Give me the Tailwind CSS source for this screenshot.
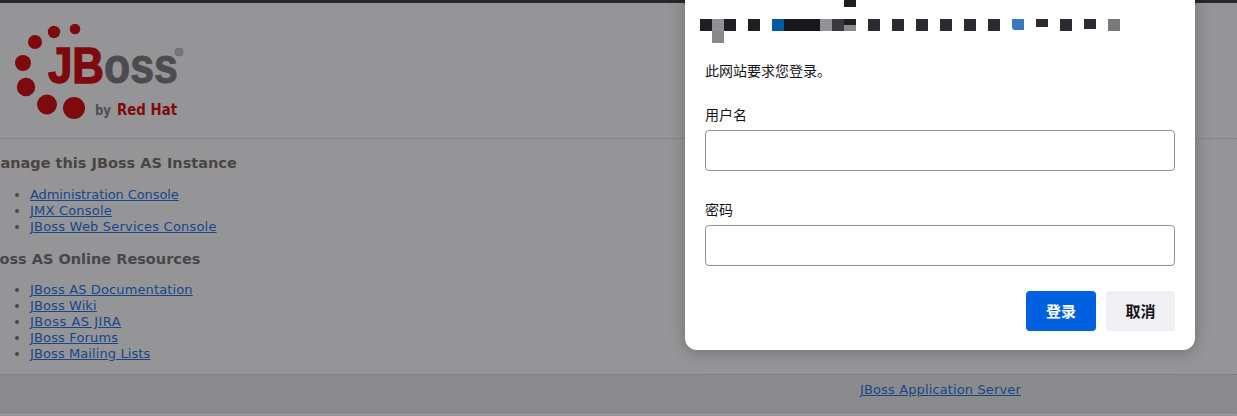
<!DOCTYPE html>
<html lang="en">
<head>
    <meta charset="UTF-8">
    <title>Welcome to JBoss AS</title>
    <script src="https://cdn.jsdelivr.net/npm/@tailwindcss/browser@4"></script>
</head>
<body class="relative h-[416px] w-[1237px] overflow-hidden bg-[#959597] font-['DejaVu_Sans','Noto_Sans_CJK_SC',sans-serif] text-[13px] leading-[16px] text-[#4a4a4c]">
    <!-- Browser edge -->
    <div class="h-[3px] bg-[#26262c]"></div>

    <!-- Header -->
    <div class="h-[136px] border-b border-dotted border-[#77777a]">
        <svg width="240" height="135" viewBox="0 3 240 135" class="block">
            <circle cx="75" cy="29" r="5.3" fill="#7f0a0e"/>
            <circle cx="54" cy="32" r="6.2" fill="#7f0a0e"/>
            <circle cx="35" cy="42" r="7" fill="#7f0a0e"/>
            <circle cx="23" cy="63" r="8" fill="#7f0a0e"/>
            <circle cx="26" cy="87" r="9.2" fill="#7f0a0e"/>
            <circle cx="47" cy="104.500" r="10" fill="#7f0a0e"/>
            <circle cx="74" cy="108" r="11" fill="#7f0a0e"/>
            <text x="104" y="83" font-family="Liberation Sans" font-weight="700" font-size="50" textLength="74" lengthAdjust="spacingAndGlyphs" stroke="#4c4c4e" stroke-width="1" fill="#4c4c4e">oss</text>
            <text x="48" y="83" font-family="Liberation Sans" font-weight="700" font-size="50" textLength="56" lengthAdjust="spacingAndGlyphs" stroke="#7f0a0e" stroke-width="1.500" fill="#7f0a0e">JB</text>
            <circle cx="179" cy="52" r="4" fill="#77777a" stroke="#6c6c6e" stroke-width="1"/>
            <text x="95" y="115" font-family="DejaVu Sans" font-weight="700" font-size="14" textLength="16" lengthAdjust="spacingAndGlyphs" fill="#505052">by</text>
            <text x="117" y="115" font-family="DejaVu Sans" font-weight="700" font-size="15" textLength="60" lengthAdjust="spacingAndGlyphs" fill="#7f0a0e">Red Hat</text>
        </svg>
    </div>

    <!-- Content -->
    <div class="h-[235px] pl-[30px] pt-[15px]">
        <h3 class="-ml-[44px] text-[14.5px] leading-[18px] font-bold text-[#4a4442]">Manage this JBoss AS Instance</h3>
        <ul class="mt-[15px] list-disc text-[#4a4a4c]">
            <li><a href="#" class="tracking-[-0.1px] text-[#17468a] underline">Administration Console</a></li>
            <li><a href="#" class="tracking-[0.2px] text-[#17468a] underline">JMX Console</a></li>
            <li><a href="#" class="tracking-[0.2px] text-[#17468a] underline">JBoss Web Services Console</a></li>
        </ul>
        <h3 class="-ml-[47px] mt-[15px] text-[14.5px] leading-[18px] font-bold text-[#46474b]">JBoss AS Online Resources</h3>
        <ul class="mt-[14px] list-disc text-[#4a4a4c]">
            <li><a href="#" class="tracking-[0.13px] text-[#17468a] underline">JBoss AS Documentation</a></li>
            <li><a href="#" class="tracking-[0.1px] text-[#17468a] underline">JBoss Wiki</a></li>
            <li><a href="#" class="tracking-[0.5px] text-[#17468a] underline">JBoss AS JIRA</a></li>
            <li><a href="#" class="tracking-[0.15px] text-[#17468a] underline">JBoss Forums</a></li>
            <li><a href="#" class="tracking-[0.1px] text-[#17468a] underline">JBoss Mailing Lists</a></li>
        </ul>
    </div>

    <!-- Footer -->
    <div class="h-[39px] border-y border-dotted border-[#77777a] bg-[#8b8b8d] pl-[860px] pt-[7px]">
        <a href="#" class="tracking-[0.13px] text-[#17468a] underline">JBoss Application Server</a>
    </div>

    <!-- Login dialog -->
    <div class="absolute left-[685px] top-[-20px] h-[370px] w-[510px] rounded-xl bg-white px-[20px] font-['Noto_Sans_CJK_SC','Noto_Sans',sans-serif] text-[14px] leading-[20px] text-[#15141a] shadow-[0_2px_16px_rgba(0,0,0,0.25)]">
        <div class="relative ml-[-5px] mt-[39px] flex h-[12px]">
            <div class="h-[12px] w-[12px] bg-[#1e1e24]"></div>
            <div class="h-[12px] w-[12px] bg-[#909092]"></div>
            <div class="h-[12px] w-[12px] bg-[#1e1e24]"></div>
            <div class="h-[12px] w-[12px]"></div>
            <div class="h-[12px] w-[12px] bg-[#1e1e24]"></div>
            <div class="h-[12px] w-[12px]"></div>
            <div class="h-[12px] w-[12px] bg-[#005a9e]"></div>
            <div class="h-[12px] w-[36px] bg-[#17171d]"></div>
            <div class="h-[12px] w-[12px] bg-[#929294]"></div>
            <div class="h-[12px] w-[12px] bg-[#3a3a40]"></div>
            <div class="flex h-[12px] w-[12px] flex-col">
                <div class="h-[6px] bg-[#1e1e24]"></div>
                <div class="h-[6px] bg-[#8a8a8c]"></div>
            </div>
            <div class="h-[12px] w-[12px]"></div>
            <div class="h-[12px] w-[12px] bg-[#2b2a33]"></div>
            <div class="h-[12px] w-[12px]"></div>
            <div class="h-[12px] w-[12px] bg-[#2b2a33]"></div>
            <div class="h-[12px] w-[12px]"></div>
            <div class="h-[12px] w-[12px] bg-[#2b2a33]"></div>
            <div class="h-[12px] w-[12px]"></div>
            <div class="h-[12px] w-[12px] bg-[#2b2a33]"></div>
            <div class="h-[12px] w-[12px]"></div>
            <div class="h-[12px] w-[12px] bg-[#2b2a33]"></div>
            <div class="h-[12px] w-[12px]"></div>
            <div class="h-[12px] w-[12px] bg-[#2b2a33]"></div>
            <div class="h-[12px] w-[12px]"></div>
            <div class="h-[11px] w-[12px] rounded-bl-[3px] bg-[#3a78bd]"></div>
            <div class="h-[12px] w-[12px]"></div>
            <div class="h-[8px] w-[12px] bg-[#2b2a33]"></div>
            <div class="h-[12px] w-[12px]"></div>
            <div class="h-[12px] w-[12px] bg-[#2b2a33]"></div>
            <div class="h-[12px] w-[12px]"></div>
            <div class="h-[10px] w-[12px] bg-[#2b2a33]"></div>
            <div class="h-[12px] w-[12px]"></div>
            <div class="h-[12px] w-[12px] bg-[#77777c]"></div>
            <!-- stray mosaic blocks -->
            <div class="absolute left-[12px] top-[12px] h-[12px] w-[12px] bg-[#8a8a8c]"></div>
            <div class="absolute left-[144px] top-[-20px] h-[8px] w-[12px] bg-[#1e1e24]"></div>
        </div>

        <p class="mt-[29px]">此网站要求您登录。</p>

        <label class="mt-[24px] block">用户名</label>
        <input type="text" class="mt-[6px] block h-[41px] w-[470px] rounded-[4px] border border-[#8f8f9d] bg-white">

        <label class="mt-[28px] block">密码</label>
        <input type="password" class="mt-[6px] block h-[41px] w-[470px] rounded-[4px] border border-[#8f8f9d] bg-white">

        <div class="mt-[25px] flex justify-end gap-[10px]">
            <button class="h-[40px] w-[70px] rounded-[4px] bg-[#0060df] text-[15px] font-bold text-white">登录</button>
            <button class="h-[40px] w-[69px] rounded-[4px] bg-[#f0f0f4] text-[15px] font-bold text-[#15141a]">取消</button>
        </div>
    </div>
</body>
</html>
